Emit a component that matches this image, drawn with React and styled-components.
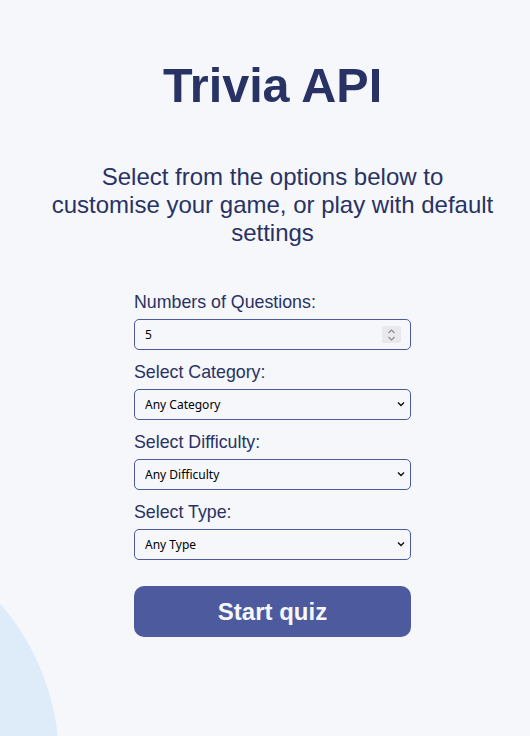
import React from "react";
import styled, { createGlobalStyle } from "styled-components";

const GlobalStyle = createGlobalStyle`
  html, body {
    margin: 0;
    padding: 0;
    background: #f5f7fb;
  }
  * {
    box-sizing: border-box;
  }
`;

const categories = ["Any Category"];
const difficulties = ["Any Difficulty"];
const types = ["Any Type"];

const Chevron = () => (
  <svg width="8" height="6" viewBox="0 0 8 6">
    <path d="M1 1.5 L4 4.5 L7 1.5" fill="none" stroke="#111" strokeWidth="1.4" />
  </svg>
);

const SelectField = ({ label, options }) => (
  <Field>
    <Label>{label}</Label>
    <SelectWrap>
      <Select defaultValue={options[0]}>
        {options.map((o) => (
          <option key={o}>{o}</option>
        ))}
      </Select>
      <Arrow>
        <Chevron />
      </Arrow>
    </SelectWrap>
  </Field>
);

const App = () => {
  return (
    <Page>
      <GlobalStyle />
      <Blob />
      <Content>
        <Title>Trivia API</Title>
        <Subtitle>
          Select from the options below to customise your game, or play with
          default settings
        </Subtitle>
        <Form>
          <Field>
            <Label>Numbers of Questions:</Label>
            <SelectWrap>
              <NumberInput type="number" defaultValue={5} />
              <Stepper>
                <svg width="9" height="14" viewBox="0 0 9 14">
                  <path d="M1.5 5 L4.5 2 L7.5 5" fill="none" stroke="#8a8a8a" strokeWidth="1.1" />
                  <path d="M1.5 9 L4.5 12 L7.5 9" fill="none" stroke="#8a8a8a" strokeWidth="1.1" />
                </svg>
              </Stepper>
            </SelectWrap>
          </Field>
          <SelectField label="Select Category:" options={categories} />
          <SelectField label="Select Difficulty:" options={difficulties} />
          <SelectField label="Select Type:" options={types} />
          <StartButton>Start quiz</StartButton>
        </Form>
      </Content>
    </Page>
  );
};

const Page = styled.div`
  position: relative;
  width: 100%;
  height: 736px;
  overflow: hidden;
  background: #f5f7fb;
  font-family: "Liberation Sans", Arial, sans-serif;
`;

const Blob = styled.div`
  position: absolute;
  left: -421px;
  top: 521px;
  width: 480px;
  height: 480px;
  border-radius: 50%;
  background: #deebf8;
`;

const Content = styled.div`
  position: relative;
  display: flex;
  flex-direction: column;
  align-items: center;
  padding-top: 58px;
  padding-left: 15px;
`;

const Title = styled.h1`
  margin: 0;
  color: #293264;
  font-size: 48.5px;
  font-weight: 700;
  line-height: 55px;
`;

const Subtitle = styled.p`
  margin: 50px 0 0;
  width: 446px;
  text-align: center;
  color: #293264;
  font-size: 24px;
  line-height: 28px;
`;

const Form = styled.div`
  width: 277px;
  margin-top: 45px;
  display: flex;
  flex-direction: column;
  gap: 12px;
`;

const Field = styled.div`
  display: flex;
  flex-direction: column;
  gap: 6px;
`;

const Label = styled.label`
  color: #293264;
  font-size: 17.8px;
  line-height: 21px;
`;

const SelectWrap = styled.div`
  position: relative;
  height: 31px;
`;

const controlStyles = `
  width: 100%;
  height: 31px;
  border: 1px solid #4d5b9e;
  border-radius: 5px;
  background: #f5f7fb;
  padding: 0 10px;
  color: #000;
  font-family: "Noto Sans", "Open Sans", sans-serif;
  font-size: 12px;
  outline: none;
`;

const Select = styled.select`
  ${controlStyles}
  appearance: none;
  -webkit-appearance: none;
`;

const NumberInput = styled.input`
  ${controlStyles}
  -moz-appearance: textfield;
  &::-webkit-inner-spin-button,
  &::-webkit-outer-spin-button {
    -webkit-appearance: none;
    margin: 0;
  }
`;

const Arrow = styled.span`
  position: absolute;
  right: 6px;
  top: 12px;
  display: flex;
  pointer-events: none;
`;

const Stepper = styled.span`
  position: absolute;
  right: 10px;
  top: 7px;
  width: 19px;
  height: 17px;
  display: flex;
  align-items: center;
  justify-content: center;
  background: #e9e9ed;
  border-radius: 2px;
  pointer-events: none;
`;

const StartButton = styled.button`
  margin-top: 14px;
  height: 51px;
  border: none;
  border-radius: 10px;
  background: #4d5b9e;
  color: #f5f7fb;
  font-family: "Liberation Sans", Arial, sans-serif;
  font-size: 24px;
  font-weight: 700;
  cursor: pointer;
`;

export default App;
